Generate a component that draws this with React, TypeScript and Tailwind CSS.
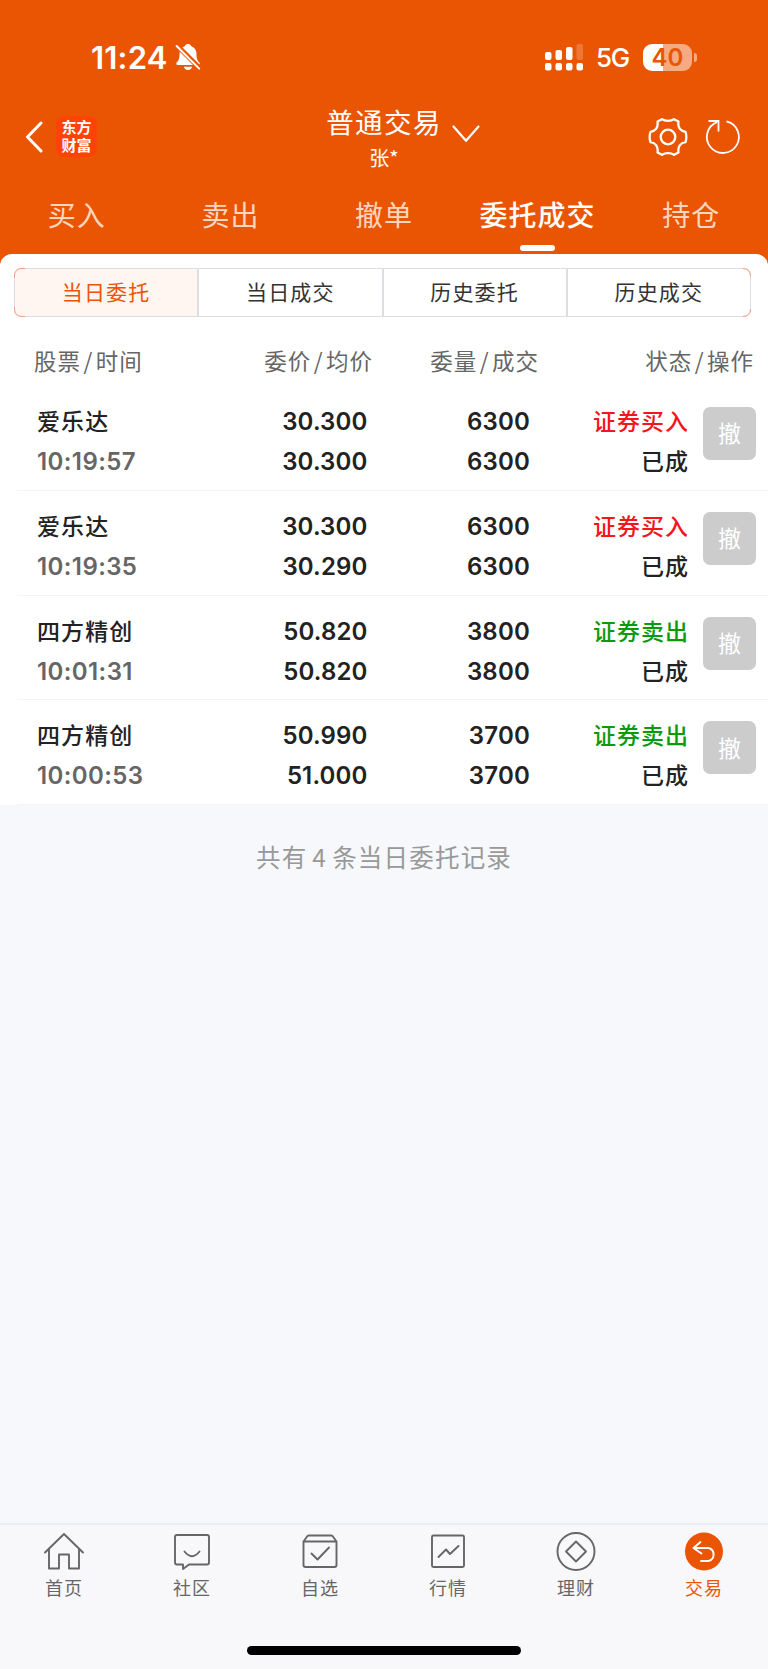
import type { ReactNode } from 'react';

type Order = { name: string; time: string; price: string; avg: string; qty: string; done: string; side: 'buy' | 'sell' };

const orders: Order[] = [
  { name: '爱乐达', time: '10:19:57', price: '30.300', avg: '30.300', qty: '6300', done: '6300', side: 'buy' },
  { name: '爱乐达', time: '10:19:35', price: '30.300', avg: '30.290', qty: '6300', done: '6300', side: 'buy' },
  { name: '四方精创', time: '10:01:31', price: '50.820', avg: '50.820', qty: '3800', done: '3800', side: 'sell' },
  { name: '四方精创', time: '10:00:53', price: '50.990', avg: '51.000', qty: '3700', done: '3700', side: 'sell' },
];

const tabs = ['买入', '卖出', '撤单', '委托成交', '持仓'];
const segments = ['当日委托', '当日成交', '历史委托', '历史成交'];

function StatusBar() {
  return (
    <div className="flex h-[114px] items-center pl-[91px] pr-[71px] font-['Inter',sans-serif] text-white">
      <span className="text-[31px] leading-none font-semibold tracking-[0.200px]">11:24</span>
      <svg className="ml-[7px]" width="26" height="28" viewBox="0 0 26 28" fill="#fff">
        <path d="M13 1c1.800 0 3 1 3.300 2.300 3.500 1.100 5.200 4.100 5.200 7.700 0 5 1 6.500 2.700 8.300 1 1.200.600 2.700-1 2.700H2.800c-1.600 0-2-1.500-1-2.700C3.500 17.500 4.500 16 4.500 11c0-3.600 1.700-6.600 5.200-7.700C10 2 11.200 1 13 1zM8.800 23.800h8.400c-.4 2-2 3.200-4.200 3.200s-3.800-1.200-4.200-3.200z" />
        <path d="M2 2.500l23 23" stroke="#ea5504" strokeWidth="5" />
        <path d="M1.600 3l22.600 22.600" stroke="#fff" strokeWidth="2" strokeLinecap="round" />
      </svg>
      <svg className="ml-auto" width="38" height="27" viewBox="0 0 38 27" fill="#fff">
        <rect x="0" y="8" width="6.500" height="8" rx="2" />
        <rect x="10.500" y="6" width="6.500" height="10" rx="2" />
        <rect x="21" y="3" width="6.500" height="13" rx="2" />
        <rect x="31.500" y="0" width="6.500" height="16" rx="2" opacity=".2" />
        <rect x="0" y="19" width="6.500" height="7.500" rx="2" />
        <rect x="10.500" y="19" width="6.500" height="7.500" rx="2" />
        <rect x="21" y="19" width="6.500" height="7.500" rx="2" />
        <rect x="31.500" y="19" width="6.500" height="7.500" rx="2" />
      </svg>
      <span className="mt-[2px] ml-[13px] text-[26px] leading-none font-medium tracking-[-1.300px]">5G</span>
      <div className="ml-[14px] flex items-center">
        <div className="flex h-[27px] w-[49px] items-center justify-center rounded-[9px] bg-[linear-gradient(to_right,#fff_41%,#f6aa81_41%)] pt-px text-[24px] leading-none font-semibold text-[#ea5504]">40</div>
        <div className="ml-[2px] h-[9px] w-[3px] rounded-r-full bg-[#f6aa81]" />
      </div>
    </div>
  );
}

function TitleBar() {
  return (
    <div className="flex h-[70px] px-[25px] text-white">
      <div className="flex w-[250px] items-center pb-[11px]">
        <svg width="18" height="32" viewBox="0 0 18 32" fill="none" stroke="#fff" strokeWidth="3" strokeLinecap="round" strokeLinejoin="round">
          <path d="M16 2L2.500 16l13.500 14" />
        </svg>
        <div className="ml-[13px] flex h-[41px] w-[41px] items-center justify-center rounded-[8px] bg-[#ff4305] pb-[2px] text-[15px] leading-[17.500px] font-bold">
          <span className="w-[30px] break-all">东方财富</span>
        </div>
      </div>
      <div className="flex flex-1 flex-col items-center">
        <div className="flex h-[31px] items-center pl-[38px]">
          <span className="-mt-[2px] text-[27.500px] leading-none tracking-[1.400px]">普通交易</span>
          <svg className="mt-[22px] ml-[10px]" width="28" height="18" viewBox="0 0 28 18" fill="none" stroke="#fff" strokeWidth="2.200" strokeLinecap="round" strokeLinejoin="round">
            <path d="M1.500 1.500L14 15.800 26.500 1.500" />
          </svg>
        </div>
        <span className="mt-[7px] text-[20px] leading-[26px]">张*</span>
      </div>
      <div className="flex w-[250px] items-center justify-end pb-[11px]">
        <svg width="40" height="40" viewBox="-20 -20 40 40" fill="none" stroke="#fff" strokeWidth="2.300" strokeLinejoin="round">
          <path d="M-6-17.800C-3-15.500 3-15.500 6-17.800L10.500-15.500C9.500-9.500 12.500-5.800 17.500-5.200Q19.200 0 17.500 5.200C12.500 5.800 9.500 9.500 10.500 15.500L6 17.800C3 15.500-3 15.500-6 17.800L-10.500 15.500C-9.500 9.500-12.500 5.800-17.500 5.200Q-19.200 0-17.500-5.200C-12.500-5.800-9.500-9.500-10.500-15.500Z" />
          <circle r="7.300" />
        </svg>
        <svg className="ml-[16px] mr-[1px]" width="38" height="38" viewBox="-19 -19 38 38" fill="none" stroke="#fff" strokeWidth="1.800">
          <path d="M3.500-15.600A16 16 0 1 1-6-14.900M-14.500-16H-4.500V-5.500" />
        </svg>
      </div>
    </div>
  );
}

function Lines({ className, top, bottom }: { className: string; top: ReactNode; bottom: ReactNode }) {
  return (
    <div className={`flex flex-col leading-[40px] ${className}`}>
      {top}
      {bottom}
    </div>
  );
}

function OrderRow({ o }: { o: Order }) {
  return (
    <div className="ml-[17px] flex h-[104.800px] border-b border-[#f4f4f6] pt-[16px] pr-[12px] text-[#222]">
      <Lines
        className="w-[180px] pl-[20px]"
        top={<span className="-mt-[2px] mb-[2px] text-[23px] font-medium tracking-[1.100px]">{o.name}</span>}
        bottom={<span className="font-['Inter',sans-serif] text-[24px] font-semibold tracking-[0.400px] text-[#666]">{o.time}</span>}
      />
      <Lines
        className="w-[170.500px] text-right font-['Inter',sans-serif] text-[24px] font-semibold tracking-[0.150px]"
        top={<span>{o.price}</span>}
        bottom={<span>{o.avg}</span>}
      />
      <Lines
        className="w-[162.500px] text-right font-['Inter',sans-serif] text-[24px] font-semibold tracking-[0.200px]"
        top={<span>{o.qty}</span>}
        bottom={<span>{o.done}</span>}
      />
      <Lines
        className="-mt-[2px] flex-1 text-right text-[23px] font-medium tracking-[1px]"
        top={o.side === 'buy' ? <span className="text-[#f5151b]">证券买入</span> : <span className="text-[#0a9a0a]">证券卖出</span>}
        bottom={<span>已成</span>}
      />
      <button className="mt-[5px] ml-[14px] h-[53px] w-[53px] rounded-[7px] bg-[#ccc] pb-[2px] text-[23px] text-white">撤</button>
    </div>
  );
}

const navItems: { label: string; icon: ReactNode }[] = [
  { label: '首页', icon: <path d="M1 20.500L20 2l19 18.500M5 17.500V36.500H15V22.500H25V36.500H35V17.500" /> },
  { label: '社区', icon: <><path d="M5 3H35Q37 3 37 5V30.500Q37 32.500 35 32.500H17L11 37V32.500H5Q3 32.500 3 30.500V5Q3 3 5 3Z" /><path d="M12.500 19.500Q20 29 27.500 19.500" /></> },
  { label: '自选', icon: <><path d="M3.500 9.500L7.500 4Q8 3.500 9 3.500H31Q32 3.500 32.500 4L36.500 9.500V33Q36.500 35 34.500 35H5.500Q3.500 35 3.500 33ZM3.500 9.500H36.500" /><path d="M11.500 21.500L17.500 27.500 29 15.500" /></> },
  { label: '行情', icon: <><rect x="4" y="3.500" width="32" height="31.500" rx="1.500" /><path d="M10.500 25L18 17.500 22 22 30.500 14" /></> },
  { label: '理财', icon: <><circle cx="20" cy="19.500" r="18.500" /><path d="M20 9.500L30 19.500 20 29.500 10 19.500Z" /></> },
  { label: '交易', icon: <><circle cx="20" cy="19.500" r="19" fill="#ea5504" stroke="none" /><path stroke="#fff" d="M16.500 10L9.500 16 17.500 21.500M9.500 16H24.500A6.700 6.700 0 0 1 24.500 29H17" /></> },
];

function BottomNav() {
  return (
    <nav className="h-[146px] border-t-2 border-[#ebedf2] bg-[#f8f8fb]">
      <div className="flex pt-[7px]">
        {navItems.map((n, i) => (
          <div key={n.label} className={`flex flex-1 flex-col items-center ${i === 5 ? 'text-[#ea5504]' : 'text-[#666]'}`}>
            <svg width="40" height="40" viewBox="0 0 40 40" fill="none" stroke="currentColor" strokeWidth="1.900" strokeLinecap="round" strokeLinejoin="round">
              {n.icon}
            </svg>
            <span className="mt-[2px] text-[18px] leading-[26px] tracking-[1px]">{n.label}</span>
          </div>
        ))}
      </div>
      <div className="mx-auto mt-[46px] h-[9px] w-[274px] rounded-full bg-black" />
    </nav>
  );
}

const headCols = [
  { a: '股票', b: '时间', cls: 'w-[180px]' },
  { a: '委价', b: '均价', cls: 'w-[159px] justify-end' },
  { a: '委量', b: '成交', cls: 'w-[166px] justify-end' },
  { a: '状态', b: '操作', cls: 'flex-1 justify-end' },
];

export default function App() {
  return (
    <div className="flex h-[1669px] w-[768px] flex-col overflow-hidden bg-[#f7f8fb] font-['Noto_Sans_CJK_SC',sans-serif]">
      <header className="bg-[#ea5504] pb-[12px]">
        <StatusBar />
        <div className="-mt-[7px]"><TitleBar /></div>
        <div className="flex h-[76px]">
          {tabs.map((t) => (
            <div key={t} className={`flex flex-1 flex-col items-center text-[28px] tracking-[1px] ${t === '委托成交' ? 'font-medium text-white' : 'text-[#fbd6c0]'}`}>
              <span className="mt-[17px] h-[43px] leading-[40px]">{t}</span>
              {t === '委托成交' && <span className="mt-[8px] h-[6px] w-[35px] shrink-0 rounded-full bg-white" />}
            </div>
          ))}
        </div>
      </header>
      <main className="-mt-[11px] rounded-t-[12px] bg-white">
        <div className="relative mt-[14px] mr-[17px] ml-[14px] flex h-[49px] rounded-[8px] border border-[#dcdee3]">
          {segments.map((s, i) => (
            <div key={s} className={`flex flex-1 items-center justify-center pb-[2px] text-[21px] tracking-[1.200px] ${i === 0 ? 'rounded-l-[7px] bg-[#fff5f1] text-[#ea5504]' : 'border-l-2 border-[#dcdee3] text-[#333]'}`}>{s}</div>
          ))}
          <svg className="absolute -top-px -left-px" width="12" height="49" fill="none" stroke="#f0a27c">
            <path d="M11 .5H8Q.5.5.5 8V10M.5 39V41Q.5 48.500 8 48.500H11" />
          </svg>
          <svg className="absolute -top-px -right-px" width="12" height="49" fill="none" stroke="#f0a27c">
            <path d="M4 .5Q11.500.5 11.500 8M11.500 41Q11.500 48.500 4 48.500" />
          </svg>
        </div>
        <div className="flex h-[69px] pt-[23px] pr-[14px] pl-[34px] text-[22.500px] leading-[40px] tracking-[1px] text-[#666]">
          {headCols.map((c) => (
            <div key={c.a} className={`flex ${c.cls}`}>
              {c.a}
              <span className="px-[2.500px]">/</span>
              {c.b}
            </div>
          ))}
        </div>
        {orders.map((o) => <OrderRow key={o.time} o={o} />)}
      </main>
      <p className="mt-[32px] text-center text-[24.500px] leading-[40px] tracking-[1.200px] text-[#999]">
        共有<span className="mx-[5px]">4</span>条当日委托记录
      </p>
      <div className="flex-1" />
      <BottomNav />
    </div>
  );
}
